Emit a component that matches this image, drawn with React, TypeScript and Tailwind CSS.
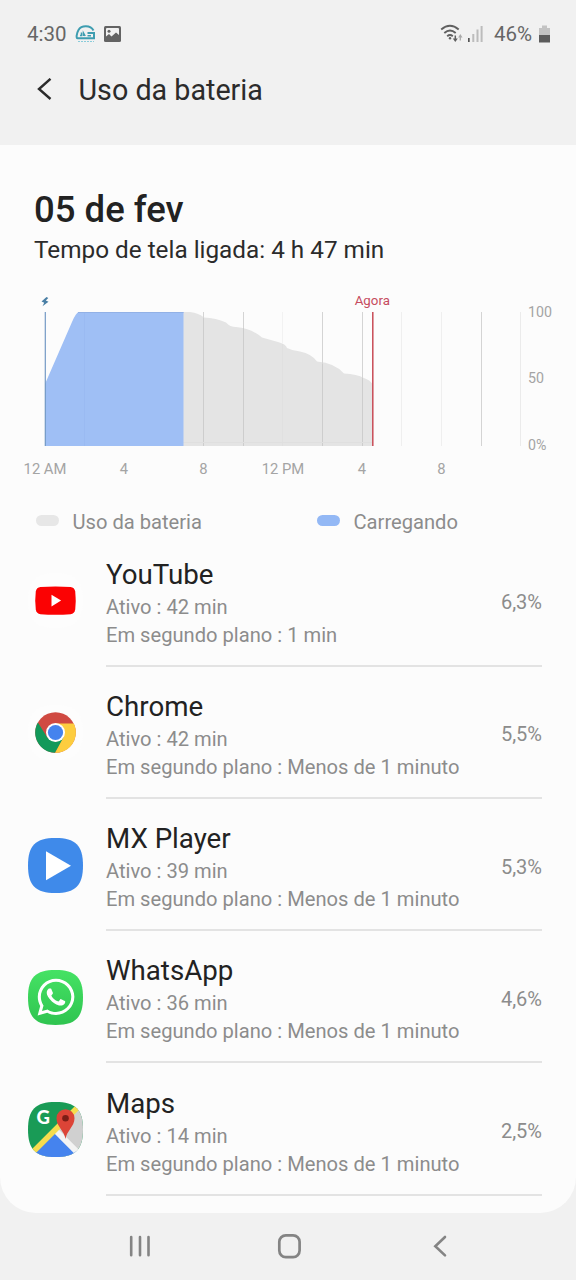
import type { ReactNode } from "react";
import { FaWhatsapp } from "react-icons/fa";

const SQUIRCLE =
  "M27.5 0C47.5 0 55 7.5 55 27.5S47.5 55 27.5 55 0 47.5 0 27.5 7.5 0 27.5 0Z";

function YouTubeIcon() {
  return (
    <svg className="size-[55px]" viewBox="0 0 55 55">
      <path d={SQUIRCLE} fill="#fdfdfd" />
      <path
        d="M12.500 14Q27.500 13 42.500 14Q46.500 14.300 47.200 18.500Q48.300 27.500 47.200 36.500Q46.500 40.800 42.500 41.200Q27.500 42.200 12.500 41.200Q8.500 40.800 7.800 36.500Q6.700 27.500 7.800 18.500Q8.500 14.300 12.500 14Z"
        fill="#fb0203"
      />
      <path d="M23.500 21.700v11.800l9.600-5.900z" fill="#fff" />
    </svg>
  );
}

function ChromeIcon() {
  return (
    <svg className="size-[55px]" viewBox="0 0 55 55">
      <path d={SQUIRCLE} fill="#fdfdfd" />
      <circle cx="27.500" cy="27.500" r="20.300" fill="#d04a42" />
      <path
        d="M9.900 17.400A20.300 20.300 0 0 0 27.100 47.800L36 32.500L27.500 37L19.300 32.500Z"
        fill="#12995a"
      />
      <path
        d="M27.500 18.600H45.800A20.300 20.300 0 0 1 27.100 47.800L35.400 32.500Z"
        fill="#fdcd3f"
      />
      <circle cx="27.500" cy="27.500" r="9.500" fill="#fff" />
      <circle cx="27.500" cy="27.500" r="7.600" fill="#4583ee" />
    </svg>
  );
}

function PlayerIcon() {
  return (
    <svg className="size-[55px]" viewBox="0 0 55 55">
      <path d={SQUIRCLE} fill="#3f8aea" />
      <path d="M18 13.300v29l25-14.500z" fill="#fff" />
    </svg>
  );
}

function WhatsAppIcon() {
  return (
    <div className="relative size-[55px]">
      <svg className="size-[55px]" viewBox="0 0 55 55">
        <defs>
          <linearGradient id="wa" x1="0" y1="0" x2="0" y2="1">
            <stop offset="0" stopColor="#45e264" />
            <stop offset="1" stopColor="#2fc450" />
          </linearGradient>
        </defs>
        <path d={SQUIRCLE} fill="url(#wa)" />
      </svg>
      <FaWhatsapp className="absolute top-[6px] left-[6.500px] size-[42px] text-white" />
    </div>
  );
}

function MapsIcon() {
  return (
    <svg className="size-[55px]" viewBox="0 0 55 55">
      <defs>
        <clipPath id="mapsClip">
          <path d={SQUIRCLE} />
        </clipPath>
      </defs>
      <g clipPath="url(#mapsClip)">
        <rect width="55" height="55" fill="#199b56" />
        <path d="M55 0V55H0Z" fill="#d0d0d0" />
        <path d="M28 29L57 58H-1Z" fill="#4583ee" />
        <path d="M27 28L56 57" stroke="#f3f3f3" strokeWidth="6" />
        <path d="M2 53L52 3" stroke="#f6dc4e" strokeWidth="5.500" />
      </g>
      <text
        x="8.600"
        y="22.300"
        fontSize="18.500"
        fontWeight="900"
        fill="#fff"
        className="font-['Lato',sans-serif]"
      >
        G
      </text>
      <path
        d="M37.500 37C36.500 29 28.500 24.500 28.500 16.200a9 9 0 0 1 18 0C46.500 24.500 38.500 29 37.500 37Z"
        fill="#dc4437"
      />
      <circle cx="37.500" cy="16.200" r="3.300" fill="#7c1d16" />
    </svg>
  );
}

interface AppUsage {
  name: string;
  active: string;
  background: string;
  percent: string;
  icon: ReactNode;
}

const apps: AppUsage[] = [
  { name: "YouTube", active: "42 min", background: "1 min", percent: "6,3%", icon: <YouTubeIcon /> },
  { name: "Chrome", active: "42 min", background: "Menos de 1 minuto", percent: "5,5%", icon: <ChromeIcon /> },
  { name: "MX Player", active: "39 min", background: "Menos de 1 minuto", percent: "5,3%", icon: <PlayerIcon /> },
  { name: "WhatsApp", active: "36 min", background: "Menos de 1 minuto", percent: "4,6%", icon: <WhatsAppIcon /> },
  { name: "Maps", active: "14 min", background: "Menos de 1 minuto", percent: "2,5%", icon: <MapsIcon /> },
];

function AppRow({ app }: { app: AppUsage }) {
  return (
    <li className="flex h-[132.250px] items-stretch pr-[34px] pl-7">
      <div className="flex w-[78px] items-center">{app.icon}</div>
      <div className="flex flex-1 items-center justify-between border-b-2 border-[#e3e3e3]">
        <div className="pt-[6px]">
          <h2 className="text-[27.700px] leading-9 text-[#222]">{app.name}</h2>
          <p className="text-[20.150px] leading-7 text-[#8c8c8c]">Ativo : {app.active}</p>
          <p className="text-[20.150px] leading-7 text-[#8c8c8c]">
            Em segundo plano : {app.background}
          </p>
        </div>
        <span className="pt-[5px] text-[20px] leading-7 text-[#8c8c8c]">{app.percent}</span>
      </div>
    </li>
  );
}

const gridLines = [
  { x: 84.5, color: "#f0f0f0" },
  { x: 124.5, color: "#f0f0f0" },
  { x: 164, color: "#f0f0f0" },
  { x: 203.5, color: "#d4d4d4" },
  { x: 243.5, color: "#d4d4d4" },
  { x: 282.5, color: "#f2f2f2" },
  { x: 322.5, color: "#d4d4d4" },
  { x: 362.5, color: "#d4d4d4" },
  { x: 401.5, color: "#efefef" },
  { x: 441.5, color: "#efefef" },
  { x: 481.5, color: "#d4d4d4" },
  { x: 520.5, color: "#ebebeb" },
];

const hours = [
  { x: 45, label: "12 AM" },
  { x: 124, label: "4" },
  { x: 203.5, label: "8" },
  { x: 283, label: "12 PM" },
  { x: 362, label: "4" },
  { x: 441.5, label: "8" },
];

function BatteryChart() {
  return (
    <svg className="block h-[200px] w-full" viewBox="0 285 576 200" fontSize="14.800" fill="#a4a4a4">
      <path
        d="M183 312H190Q199 313 204 317.500Q216 318 226 322.500Q230 327 236 327Q251 328 262 337.500L278 342Q286 344 287 348Q293 351 300 351.500Q312 354 317 361.500Q335 363 344 373.500Q357 374 364 378Q370 380 372.500 384V446H183Z"
        fill="#e4e4e4"
      />
      {gridLines.map((line) => (
        <path key={line.x} d={`M${line.x} 312V446`} stroke={line.color} />
      ))}
      <path d="M203.500 318V446M243.500 328V446M322.500 364V446M362.500 378V446" stroke="#cdcdcd" />
      <path d="M282.500 344V446" stroke="#e0e0e0" />
      <path d="M183 442.500H372" stroke="#dfdfdf" />
      <path d="M45 384L72 322Q76 312.500 79 312H183.500V446H45Z" fill="#9fbff5" />
      <path d="M78 312.500H183.500" stroke="#92b1e6" />
      <path d="M84.500 313V446" stroke="#9abaf2" />
      <path d="M45.300 312V446" stroke="#7399c4" strokeWidth="1.200" />
      <path d="M372.800 312V446" stroke="#c84b56" strokeWidth="1.500" />
      <path
        d="M46.500 297L41.500 301.500L44.200 302.700L42.500 306.300L48.500 301.800L45.800 300.600L48.300 298Z"
        fill="#4a7fa5"
      />
      <text x="372.300" y="305.300" textAnchor="middle" fontSize="13.300" fill="#c64c5e">
        Agora
      </text>
      {hours.map((hour) => (
        <text key={hour.x} x={hour.x} y="474" textAnchor="middle">
          {hour.label}
        </text>
      ))}
      <g fontSize="14.200">
        <text x="528" y="316.500">100</text>
        <text x="528" y="383.300">50</text>
        <text x="528" y="450">0%</text>
      </g>
    </svg>
  );
}

function StatusBar() {
  return (
    <div className="flex h-[68px] items-center pr-[25px] pl-[27px] text-[20.500px] text-[#666]">
      <span className="w-12">4:30</span>
      <svg className="h-[18px] w-[21px]" viewBox="0 0 21 18" fill="none">
        <path
          d="M18.500 5.500C15.500 0 6.500 0 3.500 5C1.500 8.500 1 13.200 2.500 13.200H19V8H12.500"
          stroke="#3e9db0"
          strokeWidth="2"
        />
        <path d="M5 10.500h1.500V7.500M8.500 11V8l1.700 3M12.500 10.700H16" stroke="#3e9db0" strokeWidth="1.500" />
        <path d="M3 16.500H19" stroke="#8accda" strokeDasharray="2 1" />
      </svg>
      <svg className="ml-[7.500px] h-4 w-[17px]" viewBox="0 0 17 16">
        <rect width="17" height="16" rx="1.500" fill="#636363" />
        <path d="M2 13V10.500L5 8L7.500 10.500L12 6.500L15 9V3Q15 2 14 2H3Q2 2 2 3Z" fill="#f1f1f1" />
        <circle cx="5" cy="5.200" r="1.500" fill="#636363" />
      </svg>
      <div className="flex-1" />
      <svg className="mb-[2px] h-[19px] w-[23px]" viewBox="0 0 23 19" fill="none" stroke="#606060" strokeWidth="1.900">
        <path d="M1.200 5.500Q10 -2 18.700 5.500M4.300 9Q10 4 15.700 9M7.200 12.200Q10 9.800 12.800 12.200" />
        <circle cx="10" cy="14.300" r="1.200" fill="#606060" stroke="none" />
        <path d="M15.300 11.500V16" strokeWidth="1.500" />
        <path d="M12.800 14.500h5L15.300 18z" fill="#606060" stroke="none" />
        <path d="M20.300 12V16.500" stroke="#aaa" strokeWidth="1.300" />
        <path d="M18.100 13.500h4.400L20.300 10z" fill="#aaa" stroke="none" />
      </svg>
      <svg className="mb-[2px] ml-[5px] h-[17px] w-[15px]" viewBox="0 0 15 17">
        <path d="M0 13h1.700v4H0z" fill="#555" />
        <path d="M4.300 9H6.300v8H4.300zM8.500 4.500h2v12.500h-2zM12.600 1h2v16h-2z" fill="#bcbcbc" />
      </svg>
      <span className="mr-[7px] ml-[11px]">46%</span>
      <svg className="mr-px mb-px h-[18px] w-[11px]" viewBox="0 0 11 18">
        <path d="M3 0.500h5V3h3v8H0V3h3z" fill="#c3c3c3" />
        <path d="M0 10h11v7.500H0z" fill="#5c5c5c" />
      </svg>
    </div>
  );
}

function NavigationBar() {
  return (
    <nav className="flex h-[67px] items-center pb-[2px] text-[#848484]">
      <svg className="ml-[129px] h-6 w-[22px]" viewBox="0 0 22 24" fill="none" stroke="currentColor" strokeWidth="2.600" strokeLinecap="round">
        <path d="M2.200 3V21.300M11 3V21.300M19.500 3V21.300" />
      </svg>
      <svg className="ml-[126px] h-[26px] w-[25px]" viewBox="0 0 25 26" fill="none" stroke="currentColor" strokeWidth="2.700">
        <rect x="2.300" y="2.300" width="20.300" height="21.800" rx="6.500" />
      </svg>
      <svg className="ml-[130px] h-6 w-4" viewBox="0 0 16 24" fill="none" stroke="currentColor" strokeWidth="2.600" strokeLinecap="round">
        <path d="M13 3L3.300 12.200L13 21.400" />
      </svg>
    </nav>
  );
}

export default function App() {
  return (
    <div className="flex h-[1280px] w-[576px] flex-col overflow-hidden bg-[#f1f1f1] font-['Roboto',sans-serif]">
      <header className="h-[145px]">
        <StatusBar />
        <div className="flex h-11 items-center pl-9">
          <svg className="size-6" viewBox="0 0 24 24" fill="none" stroke="#2b2b2b" strokeWidth="2.400">
            <path d="M14.500 0.800L3 11L14.500 21" />
          </svg>
          <h1 className="ml-[18.500px] text-[28.700px] leading-11 text-[#2b2b2b]">Uso da bateria</h1>
        </div>
      </header>
      <main className="h-[1068px] rounded-b-[36px] bg-[#fcfcfc] pt-[42px]">
        <section className="h-[98px] pl-[34px]">
          <h2 className="text-[36.500px] leading-[45px] font-medium text-[#222]">05 de fev</h2>
          <p className="text-[24.300px] leading-9 text-[#2b2b2b]">Tempo de tela ligada: 4 h 47 min</p>
        </section>
        <BatteryChart />
        <div className="flex h-[49.400px] items-start pt-[22px] pl-9 text-[20.150px] leading-[30px] text-[#8c8c8c]">
          <div className="flex w-[281px] items-center">
            <span className="mr-[13.500px] mb-[3px] h-[11px] w-[23px] rounded-full bg-[#e7e7e7]" />
            Uso da bateria
          </div>
          <div className="flex items-center">
            <span className="mr-[13.500px] mb-[3px] h-[11px] w-[23px] rounded-full bg-[#93b8f5]" />
            Carregando
          </div>
        </div>
        <ul>
          {apps.map((app) => (
            <AppRow key={app.name} app={app} />
          ))}
        </ul>
      </main>
      <NavigationBar />
    </div>
  );
}
